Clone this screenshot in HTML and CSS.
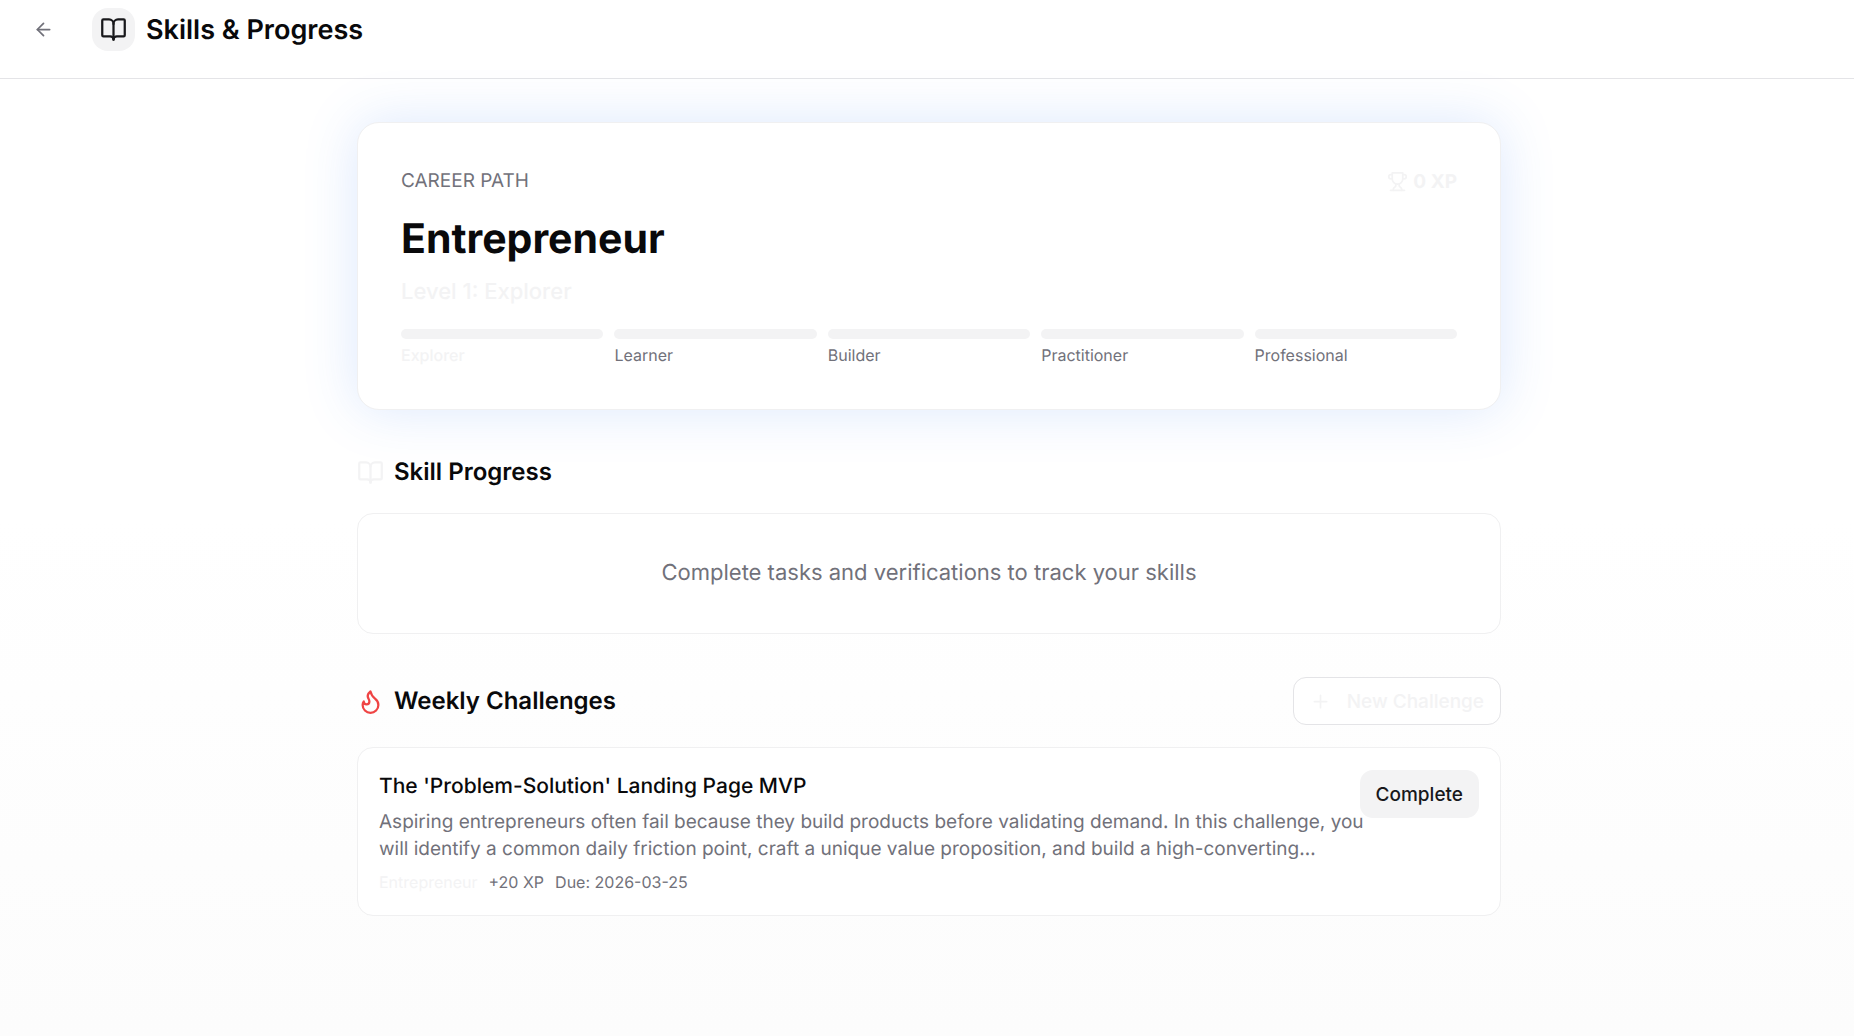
FILE: index.html
```html
<!DOCTYPE html>
<html lang="en">
<head>
  <meta charset="UTF-8">
  <meta name="viewport" content="width=device-width, initial-scale=1.0">
  <title>Skills &amp; Progress</title>
  <link rel="stylesheet" href="styles.css">
</head>
<body>
  <header class="topbar">
    <a href="#" class="back" aria-label="Back">
      <svg class="icon icon-sm" viewBox="0 0 24 24"><path d="m12 19-7-7 7-7"/><path d="M19 12H5"/></svg>
    </a>
    <span class="topbar-icon">
      <svg class="icon" viewBox="0 0 24 24"><path d="M12 7v14"/><path d="M3 18a1 1 0 0 1-1-1V4a1 1 0 0 1 1-1h5a4 4 0 0 1 4 4 4 4 0 0 1 4-4h5a1 1 0 0 1 1 1v13a1 1 0 0 1-1 1h-6a3 3 0 0 0-3 3 3 3 0 0 0-3-3z"/></svg>
    </span>
    <h1>Skills &amp; Progress</h1>
  </header>

  <main>
    <section class="career">
      <div class="career-top">
        <p class="eyebrow">CAREER PATH</p>
        <p class="xp">
          <svg class="icon icon-sm" viewBox="0 0 24 24"><path d="M6 9H4.5a2.5 2.5 0 0 1 0-5H6"/><path d="M18 9h1.500a2.500 2.500 0 0 0 0-5H18"/><path d="M4 22h16"/><path d="M10 14.660V17c0 .55-.47.98-.97 1.210C7.850 18.750 7 20.240 7 22"/><path d="M14 14.660V17c0 .55.47.98.97 1.210C16.150 18.750 17 20.240 17 22"/><path d="M18 2H6v7a6 6 0 0 0 12 0V2Z"/></svg>
          0 XP
        </p>
      </div>
      <h2>Entrepreneur</h2>
      <p class="level">Level 1: Explorer</p>
      <ol class="steps">
        <li class="current">Explorer</li>
        <li>Learner</li>
        <li>Builder</li>
        <li>Practitioner</li>
        <li>Professional</li>
      </ol>
    </section>

    <section>
      <div class="section-head">
        <svg class="icon muted" viewBox="0 0 24 24"><path d="M12 7v14"/><path d="M3 18a1 1 0 0 1-1-1V4a1 1 0 0 1 1-1h5a4 4 0 0 1 4 4 4 4 0 0 1 4-4h5a1 1 0 0 1 1 1v13a1 1 0 0 1-1 1h-6a3 3 0 0 0-3 3 3 3 0 0 0-3-3z"/></svg>
        <h3>Skill Progress</h3>
      </div>
      <div class="card empty">
        <p>Complete tasks and verifications to track your skills</p>
      </div>
    </section>

    <section>
      <div class="section-head">
        <svg class="icon flame" viewBox="0 0 24 24"><path d="M8.500 14.500A2.500 2.500 0 0 0 11 12c0-1.380-.5-2-1-3-1.072-2.143-.224-4.054 2-6 .5 2.500 2 4.900 4 6.500 2 1.600 3 3.500 3 5.500a7 7 0 1 1-14 0c0-1.153.433-2.294 1-3a2.500 2.500 0 0 0 2.500 2.500z"/></svg>
        <h3>Weekly Challenges</h3>
        <button type="button" class="btn btn-outline">
          <svg class="icon icon-sm" viewBox="0 0 24 24"><path d="M5 12h14"/><path d="M12 5v14"/></svg>
          New Challenge
        </button>
      </div>
      <article class="card challenge">
        <div class="challenge-body">
          <h4>The 'Problem-Solution' Landing Page MVP</h4>
          <p class="desc">Aspiring entrepreneurs often fail because they build products before validating demand. In this challenge, you will identify a common daily friction point, craft a unique value proposition, and build a high-converting…</p>
          <p class="meta">
            <span class="tag">Entrepreneur</span>
            <span>+20 XP</span>
            <span>Due: 2026-03-25</span>
          </p>
        </div>
        <button type="button" class="btn btn-soft">Complete</button>
      </article>
    </section>
  </main>
</body>
</html>
```
FILE: styles.css
```css
* {
  box-sizing: border-box;
}

body {
  margin: 0;
  min-height: 100vh;
  font-family: Inter, "Liberation Sans", sans-serif;
  text-rendering: geometricPrecision;
  color: #09090b;
  background: linear-gradient(#fff 50%, #fcfcfc);
}

h1, h2, h3, h4, p, ol {
  margin: 0;
  padding: 0;
}

.icon {
  width: 27px;
  height: 27px;
  flex-shrink: 0;
  fill: none;
  stroke: currentColor;
  stroke-width: 2;
  stroke-linecap: round;
  stroke-linejoin: round;
}

.icon-sm {
  width: 21px;
  height: 21px;
}

.topbar {
  display: flex;
  align-items: center;
  padding: 8px 33px 27px;
  border-bottom: 1px solid #e4e4e7;
}

.back {
  display: flex;
  margin-right: 38px;
  color: #71717a;
}

.topbar-icon {
  display: flex;
  padding: 8px;
  margin-right: 11px;
  border-radius: 16px;
  background: #f3f3f4;
  color: #18181b;
}

h1 {
  font-size: 27px;
  line-height: 36px;
  font-weight: 600;
}

main {
  display: flex;
  flex-direction: column;
  gap: 43px;
  width: 100%;
  max-width: 1148px;
  margin: 0 auto;
  padding: 43px 0 43px 4px;
}

.career {
  padding: 43px;
  border: 1px solid #f0f0f1;
  border-radius: 22px;
  background: #fff;
  box-shadow: 0 0 54px rgba(59, 130, 246, 0.18);
}

.career-top {
  display: flex;
  justify-content: space-between;
  align-items: center;
}

.eyebrow {
  font-size: 19px;
  line-height: 30px;
  color: #71717a;
}

.xp {
  display: flex;
  align-items: center;
  gap: 5px;
  font-size: 19px;
  font-weight: 700;
  color: #f3f3f4;
}

h2 {
  margin-top: 18px;
  font-size: 41px;
  line-height: 48px;
  font-weight: 700;
}

.level {
  margin-top: 14px;
  font-size: 22px;
  line-height: 32px;
  font-weight: 500;
  color: #f3f3f4;
}

.steps {
  display: grid;
  grid-template-columns: repeat(5, 1fr);
  gap: 11px;
  margin-top: 21px;
  list-style: none;
  font-size: 16px;
  line-height: 21px;
  color: #71717a;
}

.steps li::before {
  content: "";
  display: block;
  height: 10px;
  margin-bottom: 6px;
  border-radius: 5px;
  background: #f3f3f4;
}

.steps .current {
  font-weight: 500;
  color: #f3f3f4;
}

.section-head {
  display: flex;
  align-items: center;
  gap: 10px;
  margin-bottom: 22px;
}

.section-head .btn {
  margin-left: auto;
}

h3 {
  font-size: 24px;
  line-height: 38px;
  font-weight: 600;
}

.muted {
  color: #f3f3f4;
}

.flame {
  color: #ef4444;
}

.card {
  border: 1px solid #f0f0f1;
  border-radius: 16px;
  background: #fff;
}

.empty {
  padding: 42px;
  text-align: center;
  font-size: 22px;
  line-height: 35px;
  color: #71717a;
}

.challenge {
  display: flex;
  align-items: flex-start;
  padding: 22px 21px;
}

.challenge-body {
  flex: 1;
}

h4 {
  font-size: 21px;
  line-height: 34px;
  font-weight: 500;
}

.desc {
  margin-top: 4px;
  margin-right: -5px;
  font-size: 19px;
  line-height: 27px;
  color: #71717a;
}

.meta {
  display: flex;
  gap: 11px;
  margin-top: 9px;
  font-size: 16px;
  line-height: 22px;
  color: #71717a;
}

.tag {
  color: #f3f3f4;
}

.btn {
  display: flex;
  align-items: center;
  height: 48px;
  padding: 0 15px;
  border: 1px solid transparent;
  border-radius: 13px;
  font-family: inherit;
  font-size: 19px;
  font-weight: 500;
  white-space: nowrap;
  cursor: pointer;
}

.btn-outline {
  gap: 16px;
  padding: 0 16px;
  border-color: #e4e4e7;
  background: #fff;
  color: #f3f3f4;
}

.btn-soft {
  background: #f3f3f4;
  color: #18181b;
}
```
